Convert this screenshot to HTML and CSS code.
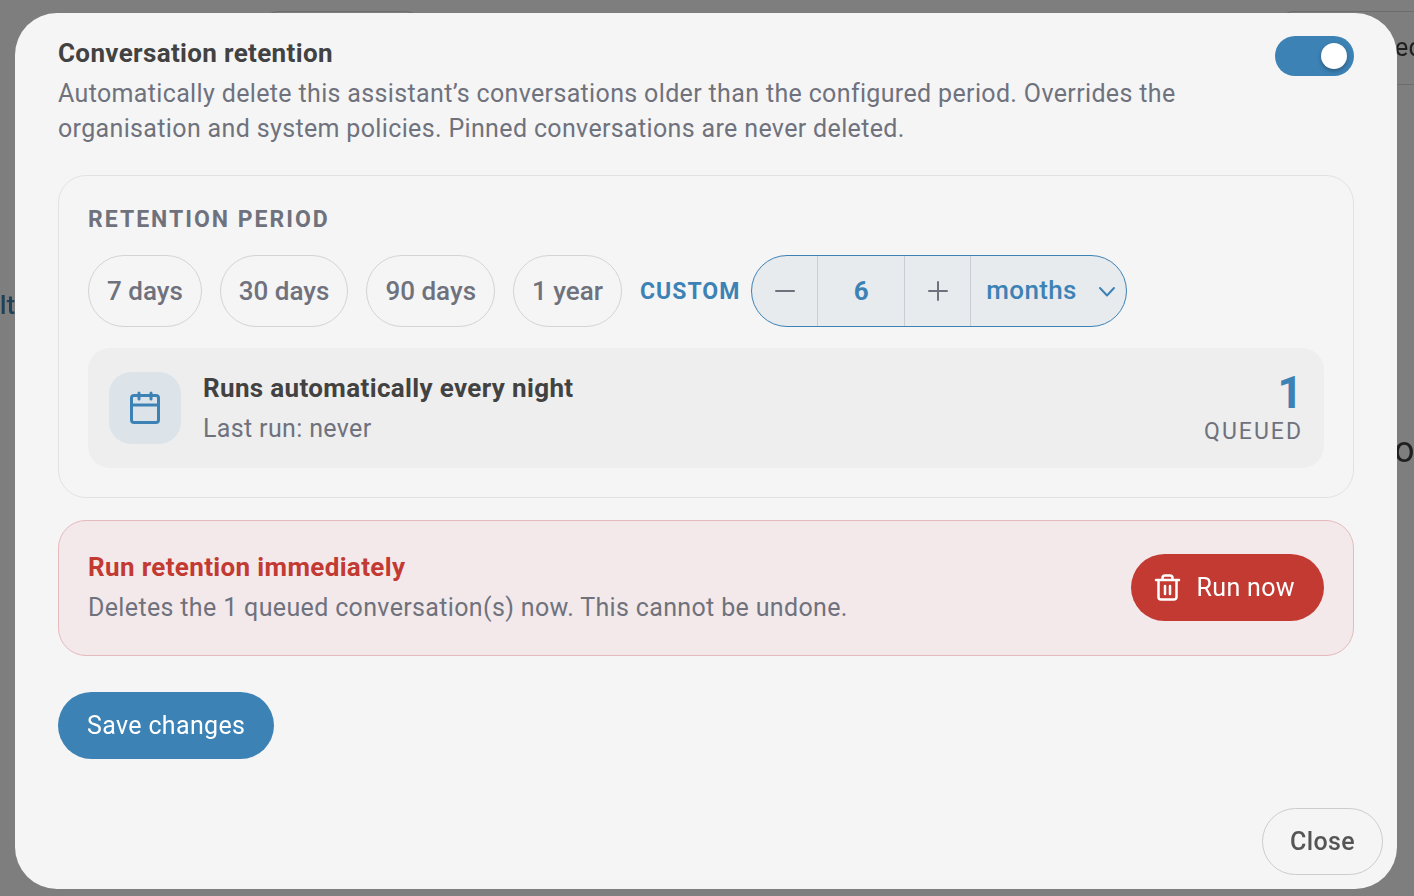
FILE: index.html
```html
<!DOCTYPE html>
<html lang="en">

<head>
    <meta charset="UTF-8">
    <meta name="viewport" content="width=device-width, initial-scale=1.0">
    <link rel="stylesheet" href="styles.css">

    <title>Conversation retention</title>
</head>

<body>
<!-- page behind the dialog -->
<div class="page" aria-hidden="true">
    <div class="page-top">
        <div class="page-tab"></div>
        <div class="page-box">ed</div>
    </div>
    <div class="page-link">lt</div>
    <div class="page-heading">o</div>
</div>

<div class="dialog" role="dialog" aria-labelledby="dialog-title">
    <div class="content">
        <div class="intro">
            <div class="intro-text">
                <h2 class="title" id="dialog-title">Conversation retention</h2>
                <p class="text">Automatically delete this assistant’s conversations older than the configured period. Overrides the organisation and system policies. Pinned conversations are never deleted.</p>
            </div>
            <input class="switch" type="checkbox" role="switch" aria-labelledby="dialog-title" checked>
        </div>

        <div class="card">
            <h3 class="label">Retention period</h3>
            <div class="periods">
                <button class="chip" type="button">7 days</button>
                <button class="chip" type="button">30 days</button>
                <button class="chip" type="button">90 days</button>
                <button class="chip" type="button">1 year</button>
                <div class="custom">
                    <label class="custom-label" for="amount">Custom</label>
                    <div class="stepper">
                        <button class="step" type="button" aria-label="Decrease">
                            <svg width="20" height="20" viewBox="0 0 20 20"><path d="M1 10h18"/></svg>
                        </button>
                        <input class="amount" id="amount" type="text" inputmode="numeric" value="6">
                        <button class="step" type="button" aria-label="Increase">
                            <svg width="20" height="20" viewBox="0 0 20 20"><path d="M1 10h18M10 1v18"/></svg>
                        </button>
                        <div class="unit">
                            <select class="unit-select" aria-label="Unit">
                                <option>days</option>
                                <option selected>months</option>
                                <option>years</option>
                            </select>
                            <svg class="chevron" width="18" height="18" viewBox="0 0 18 18"><path d="M2 5l7 7.500 7-7.500"/></svg>
                        </div>
                    </div>
                </div>
            </div>

            <div class="schedule">
                <div class="schedule-icon">
                    <svg width="36" height="36" viewBox="0 0 36 36">
                        <rect x="4.500" y="5.500" width="27" height="27" rx="2.500"/>
                        <path d="M4.500 15h27M12 3v6M24 3v6"/>
                    </svg>
                </div>
                <div class="schedule-text">
                    <h3 class="title">Runs automatically every night</h3>
                    <p class="text">Last run: never</p>
                </div>
                <div class="queue">
                    <span class="queue-count">1</span>
                    <span class="queue-label">Queued</span>
                </div>
            </div>
        </div>

        <div class="danger">
            <div class="danger-text">
                <h3 class="title">Run retention immediately</h3>
                <p class="text">Deletes the 1 queued conversation(s) now. This cannot be undone.</p>
            </div>
            <button class="btn btn-danger" type="button">
                <svg width="28" height="28" viewBox="0 0 28 28" stroke-width="2.500">
                    <path d="M3 7h23M9.500 7V5a2.500 2.500 0 0 1 2.500-2.500h5a2.500 2.500 0 0 1 2.500 2.500v2M5.500 7v17a2.500 2.500 0 0 0 2.500 2.500h13a2.500 2.500 0 0 0 2.500-2.500V7M12 13v8M17 13v8"/>
                </svg>
                Run now
            </button>
        </div>

        <button class="btn btn-primary" type="button">Save changes</button>
    </div>

    <div class="footer">
        <button class="btn btn-close" type="button">Close</button>
    </div>
</div>
</body>

</html>
```
FILE: styles.css
```css
* {
    margin: 0;
    padding: 0;
    box-sizing: border-box;
}

body {
    background: #7e7e7e;
    font-family: Roboto, "Liberation Sans", sans-serif;
    font-size: 25px;
    line-height: 35px;
    letter-spacing: 0.014em;
    color: #6f727d;
}

button, input, select {
    font: inherit;
    letter-spacing: inherit;
    color: inherit;
}

button {
    cursor: pointer;
}

svg {
    display: block;
    flex: none;
    fill: none;
    stroke: currentColor;
    stroke-linecap: round;
    stroke-linejoin: round;
}

/* page behind the dialog */
.page {
    position: fixed;
    inset: 0;
    overflow: hidden;
    display: flex;
    flex-direction: column;
    padding-top: 11px;
    color: #1f1f1f;
}

.page-top {
    display: flex;
    justify-content: space-between;
    height: 74px;
    padding-left: 262px;
}

.page-tab {
    width: 160px;
    border: 1px solid #6c6c6c;
    border-radius: 16px;
}

.page-box {
    width: 136px;
    border: 1px solid #6c6c6c;
    border-right: 0;
    border-radius: 16px 0 0 16px;
    padding: 18px 0 0 116px;
}

.page-link {
    margin-top: 203px;
    color: #1e4059;
    font-weight: 500;
}

.page-heading {
    align-self: flex-end;
    width: 20px;
    margin-top: 110px;
    font-size: 36px;
}

/* dialog */
.dialog {
    position: relative;
    display: flex;
    flex-direction: column;
    justify-content: space-between;
    min-height: calc(100vh - 20px);
    margin: 13px 17px 7px 15px;
    border-radius: 42px;
    background: #f5f5f5;
}

.content {
    padding: 22px 43px 0;
}

.title {
    font-size: 26px;
    line-height: 36px;
    font-weight: 700;
    color: #424242;
}

.intro {
    display: flex;
    justify-content: space-between;
    align-items: flex-start;
    gap: 60px;
    margin-bottom: 29px;
}

.text {
    margin-top: 5px;
}

.switch {
    appearance: none;
    flex: none;
    display: flex;
    align-items: center;
    justify-content: flex-end;
    width: 79px;
    height: 40px;
    margin-top: 1px;
    padding: 0 7px;
    border-radius: 20px;
    background: #3d82b5;
    cursor: pointer;
}

.switch::before {
    content: "";
    width: 26px;
    height: 26px;
    border-radius: 50%;
    background: #fff;
    box-shadow: 0 2px 4px rgba(0, 0, 0, 0.3);
}

.card {
    padding: 29px;
    border: 1px solid #e2e2e2;
    border-radius: 28px;
}

.label {
    font-size: 23px;
    line-height: 30px;
    font-weight: 700;
    letter-spacing: 2px;
    text-transform: uppercase;
}

.periods {
    display: flex;
    flex-wrap: wrap;
    gap: 18px;
    margin: 20px 0 21px;
}

.chip {
    height: 72px;
    padding: 0 18px;
    border: 1px solid #d4d4d4;
    border-radius: 36px;
    background: transparent;
    font-size: 26px;
    font-weight: 500;
    letter-spacing: 0;
}

.custom {
    display: flex;
    align-items: center;
    gap: 11px;
    color: #3d82b5;
}

.custom-label {
    font-size: 23px;
    font-weight: 700;
    letter-spacing: 1px;
    text-transform: uppercase;
}

.stepper {
    display: flex;
    height: 72px;
    overflow: hidden;
    border: 1px solid #3d82b5;
    border-radius: 36px;
    background: #e7ebee;
}

.step {
    display: flex;
    align-items: center;
    justify-content: center;
    width: 65px;
    border: 0;
    background: transparent;
    color: #6f727d;
}

.step svg,
.chevron {
    stroke-width: 2;
}

.amount {
    width: 88px;
    border: solid #c8ced3;
    border-width: 0 1px;
    background: transparent;
    font-size: 26px;
    font-weight: 700;
    text-align: center;
}

.unit {
    position: relative;
    display: flex;
    border-left: 1px solid #c8ced3;
}

.unit-select {
    appearance: none;
    width: 155px;
    padding: 0 44px 2px 15px;
    border: 0;
    background: transparent;
    font-size: 26px;
    font-weight: 500;
}

.chevron {
    position: absolute;
    right: 10px;
    top: 27px;
    pointer-events: none;
}

.schedule {
    display: flex;
    align-items: center;
    gap: 22px;
    padding: 21px;
    border-radius: 22px;
    background: #eee;
}

.schedule-icon {
    display: flex;
    align-items: center;
    justify-content: center;
    width: 72px;
    height: 72px;
    border-radius: 22px;
    background: #dde4e9;
    color: #3d82b5;
}

.schedule-icon svg {
    stroke-width: 3;
}

.schedule-text {
    flex: 1;
}

.queue {
    display: flex;
    flex-direction: column;
    align-items: flex-end;
}

.queue-count {
    font-size: 44px;
    line-height: 48px;
    font-weight: 700;
    color: #3d82b5;
}

.queue-label {
    font-size: 23px;
    line-height: 30px;
    letter-spacing: 2px;
    text-transform: uppercase;
}

.danger {
    display: flex;
    align-items: center;
    justify-content: space-between;
    gap: 24px;
    margin: 22px 0 36px;
    padding: 28px 29px 30px;
    border: 1px solid #e6b9bc;
    border-radius: 28px;
    background: #f3e9ea;
}

.danger .title {
    color: #c23a32;
}

.btn {
    display: flex;
    align-items: center;
    gap: 16px;
    height: 67px;
    padding: 0 29px;
    border: 0;
    border-radius: 34px;
    color: #fff;
}

.btn-danger {
    padding-left: 22px;
    background: #c23a32;
}

.btn-primary {
    background: #3d82b5;
}

.footer {
    display: flex;
    justify-content: flex-end;
    padding: 14px;
}

.btn-close {
    padding: 0 27px;
    border: 1px solid #ccc;
    background: transparent;
    font-weight: 500;
    color: #555;
}
```
